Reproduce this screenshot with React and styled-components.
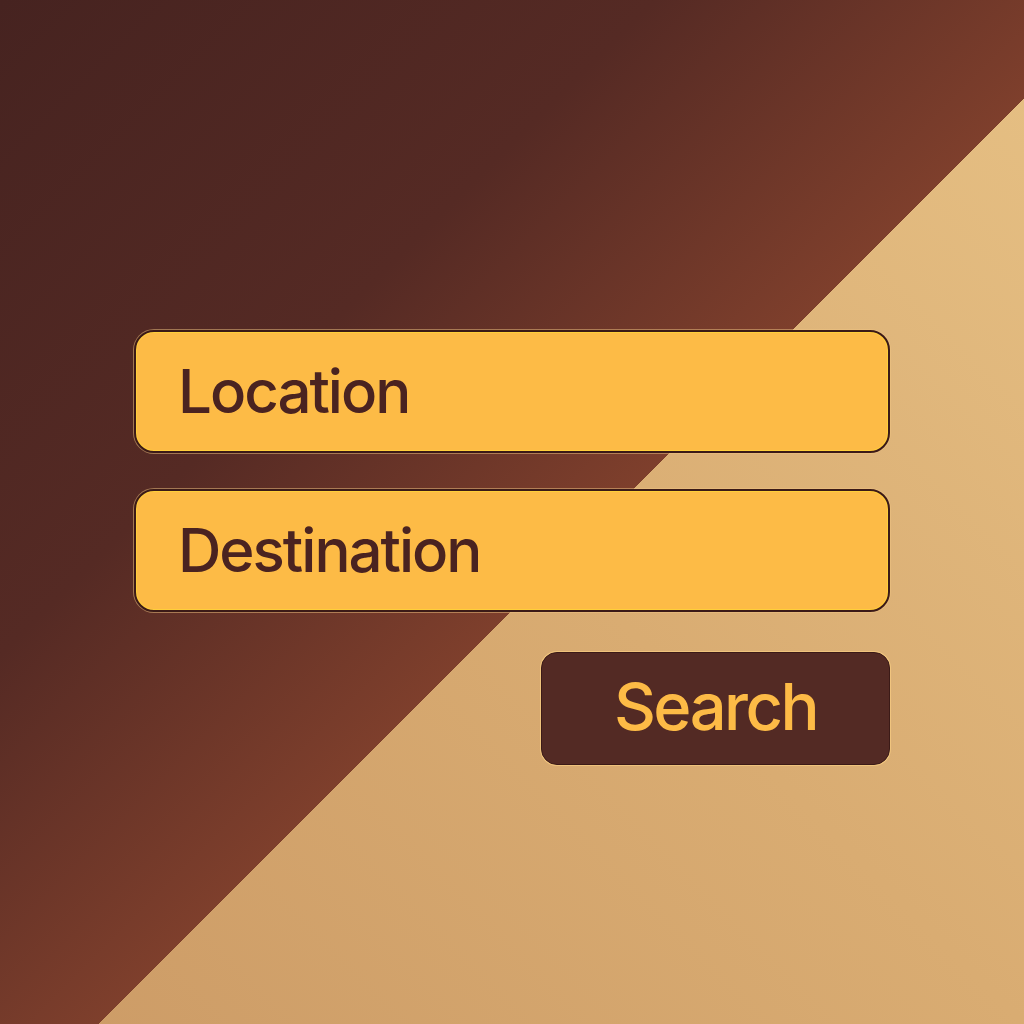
import React from "react";
import styled, { createGlobalStyle } from "styled-components";

const Global = createGlobalStyle`
  html, body { margin: 0; padding: 0; }
  body { font-family: Inter, "Noto Sans", sans-serif; }
`;

const Page = styled.div`
  width: 1024px;
  height: 1024px;
  box-sizing: border-box;
  padding: 330px 134px 0 134px;
  background:
    linear-gradient(135deg, #462320 0%, #552a24 32%, #7e3f2c 54.8%, transparent 54.8%),
    linear-gradient(45deg, #cc9b66 0%, #d9ac72 50%, #e6c084 100%);
  display: flex;
  flex-direction: column;
  align-items: stretch;
`;

const Field = styled.div`
  height: 123px;
  box-sizing: border-box;
  border: 2px solid #3b1a17;
  border-radius: 20px;
  background: #fdbb46;
  box-shadow: inset 0 0 0 1px #ffcf3a, 0 0 0 1px rgba(240, 196, 130, 0.5);
  display: flex;
  align-items: center;
  padding: 0 0 2px 42px;
  margin-bottom: ${(p) => p.$gap}px;
  font-size: 60px;
  font-weight: 500;
  letter-spacing: -2px;
  color: #4a2320;
`;

const Actions = styled.div`
  display: flex;
  justify-content: flex-end;
`;

const Button = styled.button`
  width: 349px;
  height: 113px;
  box-sizing: border-box;
  border: 1px solid #3b1a17;
  border-radius: 16px;
  background: #532a24;
  box-shadow: 0 0 0 1px rgba(250, 205, 130, 0.7);
  color: #fdbb46;
  font-family: Inter, "Noto Sans", sans-serif;
  font-size: 65px;
  font-weight: 500;
  letter-spacing: -2.5px;
  padding: 0 0 4px 0;
  display: flex;
  align-items: center;
  justify-content: center;
  cursor: pointer;
`;

export default function App() {
  return (
    <>
      <Global />
      <Page>
        <Field $gap={36}>Location</Field>
        <Field $gap={40}>Destination</Field>
        <Actions>
          <Button>Search</Button>
        </Actions>
      </Page>
    </>
  );
}
